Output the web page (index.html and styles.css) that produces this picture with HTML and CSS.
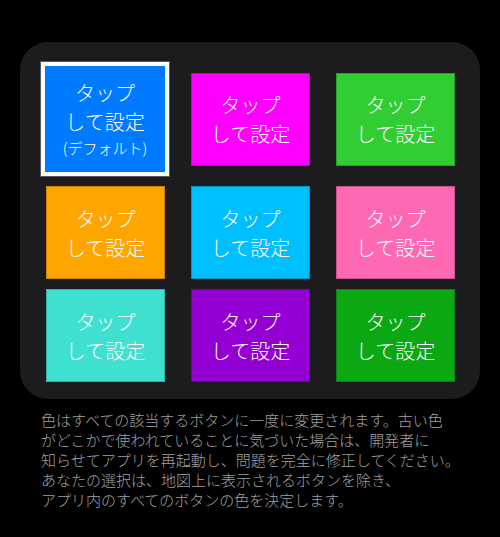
FILE: index.html
```html
<!DOCTYPE html>
<html lang="ja">
<head>
<meta charset="utf-8">
<title>ボタンの色</title>
<link rel="stylesheet" href="styles.css">
</head>
<body>
  <div class="panel">
    <div class="grid">
      <button class="swatch selected" style="background:#007aff">タップ<br>して設定<span class="note">(デフォルト)</span></button>
      <button class="swatch" style="background:#ff00ff">タップ<br>して設定</button>
      <button class="swatch" style="background:#32cd32">タップ<br>して設定</button>
      <button class="swatch" style="background:#ffa500">タップ<br>して設定</button>
      <button class="swatch" style="background:#00bfff">タップ<br>して設定</button>
      <button class="swatch" style="background:#ff69b4">タップ<br>して設定</button>
      <button class="swatch" style="background:#40e0d0">タップ<br>して設定</button>
      <button class="swatch" style="background:#9400d3">タップ<br>して設定</button>
      <button class="swatch" style="background:#0ca814">タップ<br>して設定</button>
    </div>
  </div>
  <p class="caption">色はすべての該当するボタンに一度に変更されます。古い色<br>がどこかで使われていることに気づいた場合は、開発者に<br>知らせてアプリを再起動し、問題を完全に修正してください。<br>あなたの選択は、地図上に表示されるボタンを除き、<br>アプリ内のすべてのボタンの色を決定します。</p>
</body>
</html>
```

FILE: styles.css
```css
html, body {
  margin: 0;
  padding: 0;
  background: #000;
}

body {
  font-family: "Noto Sans CJK JP", "Noto Sans", sans-serif;
  padding-top: 42px;
}

.panel {
  margin: 0 20px;
  width: 460px;
  box-sizing: border-box;
  background: #1c1c1e;
  border-radius: 28px;
  padding: 20px 25px 17px 26px;
}

.grid {
  display: grid;
  grid-template-columns: repeat(3, 119px);
  column-gap: 26px;
  row-gap: 10px;
  align-items: center;
}

.swatch {
  display: flex;
  flex-direction: column;
  align-items: center;
  justify-content: center;
  height: 93px;
  margin: 0;
  padding: 0;
  border: none;
  box-shadow: inset 0 0 0 1px rgba(0, 0, 0, 0.22);
  color: #fff;
  font-family: inherit;
  font-size: 20px;
  line-height: 29px;
  font-weight: 300;
  text-align: center;
}

.swatch.selected {
  height: 114px;
  margin: 0 -4px 0 -5px;
  border: 4px solid #fff;
  box-shadow: 0 0 0 1px #5a5a5e;
}

.note {
  display: block;
  font-size: 15px;
  line-height: 24px;
}

.caption {
  margin: 11px 0 0 41px;
  color: #a0a0a4;
  font-size: 15px;
  line-height: 20px;
  font-weight: 300;
  white-space: nowrap;
}
```
